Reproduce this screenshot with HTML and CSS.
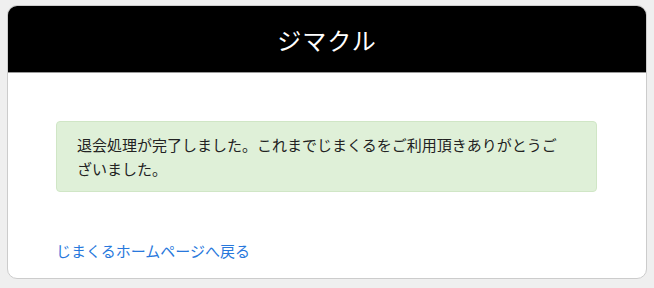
FILE: index.html
```html
<!DOCTYPE html>
<html lang="ja">
<head>
  <meta charset="UTF-8">
  <meta name="viewport" content="width=device-width, initial-scale=1.0">
  <title>ジマクル</title>
  <link rel="stylesheet" href="styles.css">
</head>
<body>
  <div class="card">
    <div class="card-header">
      <h1 class="title">ジマクル</h1>
    </div>
    <div class="card-body">
      <div class="alert">退会処理が完了しました。これまでじまくるをご利用頂きありがとうございました。</div>
      <a class="home-link" href="#">じまくるホームページへ戻る</a>
    </div>
  </div>
</body>
</html>
```

FILE: styles.css
```css
body {
  margin: 0;
  background-color: #efefef;
  font-family: "Noto Sans CJK JP", "Noto Sans", sans-serif;
  color: #222;
}
.card {
  width: 640px;
  margin: 5px auto 0;
  box-sizing: border-box;
  background-color: #fff;
  border: 1px solid #ccc;
  border-radius: 10px;
  overflow: hidden;
}
.card-header {
  height: 66px;
  background-color: #000;
  border-bottom: 1px solid #999;
  display: flex;
  justify-content: center;
  align-items: center;
}
.title {
  margin: 0;
  color: #fff;
  font-size: 24px;
  font-weight: normal;
  letter-spacing: 1px;
}
.card-body {
  padding: 48px 49px 15px 48px;
}
.alert {
  background-color: #dff0d8;
  border: 1px solid #d0e6c6;
  border-radius: 4px;
  padding: 11px 30px 10px 20px;
  font-size: 15px;
  line-height: 24px;
  margin-bottom: 47px;
}
.home-link {
  display: block;
  color: #2878dc;
  text-decoration: none;
  font-size: 15px;
  line-height: 24px;
}
```
